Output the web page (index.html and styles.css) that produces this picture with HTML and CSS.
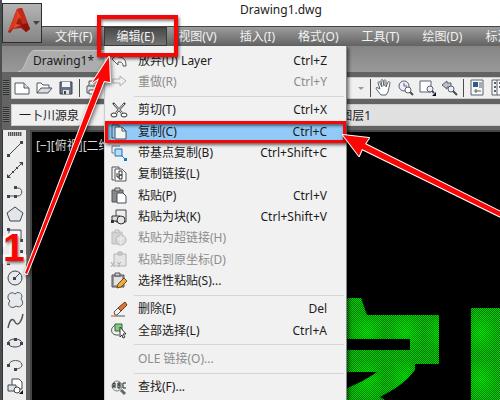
FILE: index.html
```html
<!DOCTYPE html>
<html lang="zh-CN">
  <head>
    <meta charset="UTF-8" />
    <meta name="viewport" content="width=device-width, initial-scale=1.0" />
    <title>Drawing1.dwg</title>
    <link rel="stylesheet" href="styles.css">
  </head>
  <body>
    <div class="app">
      <header class="title-bar">Drawing1.dwg</header>

      <button class="app-button" aria-label="应用程序菜单">
        <svg width="39" height="39" viewBox="0 0 39 39">
          <path d="M5 28L14 5l5-1 8 21-4 3-5-4-8 1-3 4z" fill="#a31c10" />
          <path d="M5 28L14 5l3 10-7 9z" fill="#d83a20" />
          <path d="M14 5l5-1 8 21-4 3-7-16z" fill="#c42a18" />
          <path d="M14 5l4 9-4 3 4 4-8 4 4-9z" fill="#e04a2c" />
          <path d="M13 20l3-7 3 8z" fill="#9c1a10" />
          <path d="M23 28l-5-7 6-2 3 6z" fill="#8a140c" />
          <path d="M30 17h7l-4 4z" fill="#3d4650" />
        </svg>
      </button>

      <nav class="menu-bar">
        <button>文件(F)</button>
        <button class="open">编辑(E)</button>
        <button>视图(V)</button>
        <button>插入(I)</button>
        <button>格式(O)</button>
        <button>工具(T)</button>
        <button>绘图(D)</button>
        <button>标注(N)</button>
      </nav>

      <div class="tabs">
        <button class="tab">
          <svg class="tab-edge" width="20" height="22" viewBox="0 0 20 22">
            <path d="M0 22C9 21 8 0 18 0h2v22z" fill="#adadad" />
            <path d="M0 22C9 21 8 0 18 0h2" fill="none" stroke="#c6c6c6" />
          </svg>
          <span class="tab-name">Drawing1*</span>
        </button>
      </div>

      <div class="bar">
        <span class="grip"></span>
        <div class="bar-panel tools">
          <button aria-label="新建"><svg width="18" height="18" viewBox="0 0 18 18"><path d="M2 4h9l5 5v6H2z" fill="#fff" stroke="#50565e" /><path d="M11 4v5h5" fill="#dde" stroke="#50565e" /></svg></button>
          <button aria-label="打开"><svg width="18" height="18" viewBox="0 0 18 18"><path d="M2 14V4h4l2 2h6v3" fill="#fff" stroke="#50565e" /><path d="M2 14l4-5h11l-4 5z" fill="#d8dce0" stroke="#50565e" /></svg></button>
          <button aria-label="保存"><svg width="18" height="18" viewBox="0 0 18 18"><path d="M3 3h12v12H3z" fill="#677484" stroke="#39424d" /><path d="M5 3h8v5H5z" fill="#f2f4f6" /><path d="M6 11h6v4H6z" fill="#dfe3e6" /><path d="M7 12h2v3H7z" fill="#39424d" /></svg></button>
          <span class="divider"></span>
          <button aria-label="打印"><svg width="18" height="18" viewBox="0 0 18 18"><path d="M5 7V2h8v5M3 7h12v7H3z" fill="#e6e8ea" stroke="#50565e" /><path d="M5 11h8v4H5z" fill="#fff" stroke="#50565e" /></svg></button>
          <span class="spacer"></span>
          <div class="view-tools">
            <button class="small" aria-label="重做列表"><svg width="10" height="18" viewBox="0 0 10 18"><path d="M2 8h6l-3 3z" fill="#999" /></svg></button>
            <span class="divider"></span>
            <button aria-label="平移"><svg width="18" height="18" viewBox="0 0 18 18"><path d="M6 16l-4-5c-2-3 0-3 1-2l2 1-2-6c0-2 2-2 2 0l2 4-1-6c0-2 2-2 2 0l1 5V2c0-2 2-1 2 0v6l2-5c1-1 2 0 2 1l-2 9-2 3z" fill="#fff" stroke="#59626c" /></svg></button>
            <button aria-label="实时缩放"><svg width="18" height="18" viewBox="0 0 18 18"><circle cx="7" cy="7" r="5" fill="#eef" stroke="#59626c" /><path d="M7 4v3h3" fill="none" stroke="#59626c" /><circle cx="11" cy="11" r="3" fill="#fff" stroke="#59626c" /><path d="M13 13l3 3" stroke="#454d57" stroke-width="2" /></svg></button>
            <button aria-label="窗口缩放"><svg width="18" height="18" viewBox="0 0 18 18"><path d="M1 2h11v11H1z" fill="#fff" stroke="#59626c" /><circle cx="11" cy="10" r="3" fill="#eef" stroke="#59626c" /><path d="M13 12l2 2" stroke="#454d57" stroke-width="2" /><path d="M17 13v4h-4z" fill="#111" /></svg></button>
            <button aria-label="缩放上一个"><svg width="18" height="18" viewBox="0 0 18 18"><path d="M1 6l5-4v2h4v4H6v2z" fill="#bcc3ca" stroke="#59626c" /><circle cx="10" cy="10" r="3" fill="#eef" stroke="#59626c" /><path d="M12 12l4 4" stroke="#454d57" stroke-width="2" /></svg></button>
            <span class="divider"></span>
            <button aria-label="特性"><svg width="18" height="18" viewBox="0 0 18 18"><path d="M3 1h12v15H3z" fill="#f8f8f8" stroke="#59626c" /><path d="M5 3h5v5H5z" fill="#2b5c96" /><path d="M11 4h3M11 6h3M11 8h3M6 12h7M8 10v4" stroke="#59626c" /></svg></button>
            <button aria-label="设计中心"><svg width="18" height="18" viewBox="0 0 18 18"><path d="M2 1h14v15H2zM7 1v15" fill="#f8f8f8" stroke="#59626c" /><path d="M4 4h2M4 8h2M4 12h2M9 4h5M9 8h5" stroke="#59626c" stroke-width="2" /></svg></button>
          </div>
        </div>
      </div>

      <div class="bar">
        <span class="grip"></span>
        <div class="bar-panel styles">
          <span class="style-name">一卜川源泉</span>
          <span class="layer-name">图层1</span>
        </div>
      </div>

      <main class="workspace">
        <aside class="draw-tools">
          <span class="grip-top"></span>
          <button aria-label="直线"><svg width="18" height="18" viewBox="0 0 18 18"><path d="M3 15L15 3" stroke="#3f464e" /><path d="M1 14h3v3H1zM14 1h3v3h-3z" fill="#3f464e" /></svg></button>
          <button aria-label="构造线"><svg width="18" height="18" viewBox="0 0 18 18"><path d="M3 15L15 3" stroke="#3f464e" /><path d="M1 17v-4l4 4zM17 1v4l-4-4zM6 10h2v2H6zM10 6h2v2h-2z" fill="#3f464e" /></svg></button>
          <button aria-label="多段线"><svg width="18" height="18" viewBox="0 0 18 18"><path d="M3 13h9c5 0 5-8 0-8H9" fill="none" stroke="#50565e" /><path d="M1 12h3v3H1zM8 12h3v3H8zM8 3h3v3H8z" fill="#3f464e" /></svg></button>
          <button aria-label="正多边形"><svg width="18" height="18" viewBox="0 0 18 18"><path d="M9 2l8 6-3 8H4L1 8z" fill="#e2e6ea" stroke="#3f464e" /></svg></button>
          <button aria-label="矩形"><svg width="18" height="18" viewBox="0 0 18 18"><path d="M3 4h12v10H3z" fill="#e2e6ea" stroke="#3f464e" /><path d="M1 2h3v3H1zM14 13h3v3h-3z" fill="#3f464e" /></svg></button>
          <button aria-label="圆弧"><svg width="18" height="18" viewBox="0 0 18 18"><path d="M2 15Q3 5 15 4" fill="none" stroke="#3f464e" /><path d="M1 14h3v3H1zM5 6h3v3H5zM14 2h3v3h-3z" fill="#3f464e" /></svg></button>
          <button aria-label="圆"><svg width="18" height="18" viewBox="0 0 18 18"><circle cx="9" cy="9" r="7" fill="#e6eaee" stroke="#3f464e" /><path d="M9 9l5-5" stroke="#3f464e" /><path d="M7 8h3v3H7z" fill="#3f464e" /></svg></button>
          <button aria-label="修订云线"><svg width="18" height="18" viewBox="0 0 18 18"><path d="M9 3c4-4 9 1 6 5 4 4 0 10-5 7-4 4-10-1-6-5C-1 6 4-1 9 3z" fill="#e6eaee" stroke="#50565e" /></svg></button>
          <button aria-label="样条曲线"><svg width="18" height="18" viewBox="0 0 18 18"><path d="M2 16c2-10 5-10 7-6s6 2 8-8" fill="none" stroke="#50565e" stroke-width="1.5" /></svg></button>
          <button aria-label="椭圆"><svg width="18" height="18" viewBox="0 0 18 18"><ellipse cx="9" cy="9" rx="7" ry="4" fill="#e6eaee" stroke="#3f464e" /><path d="M1 8h3v3H1zM14 8h3v3h-3zM8 4h3v3H8z" fill="#3f464e" /></svg></button>
          <button aria-label="椭圆弧"><svg width="18" height="18" viewBox="0 0 18 18"><path d="M3 9c0-6 13-6 13 0 0 3-4 4-7 4" fill="none" stroke="#50565e" /><path d="M1 8h3v3H1zM8 12h3v3H8z" fill="#3f464e" /></svg></button>
          <button aria-label="插入块"><svg width="18" height="18" viewBox="0 0 18 18"><path d="M6 2h7l3 3v7H6z" fill="#fff" stroke="#3f464e" /><path d="M2 8h8v6H2z" fill="#dfe3e7" stroke="#3f464e" /><circle cx="11" cy="13" r="3" fill="#fff" stroke="#3f464e" /><path d="M17 13v4h-4z" fill="#111" /></svg></button>
        </aside>
        <section class="canvas">
          <span class="view-label">[−][俯视][二维线框]</span>
          <!-- hatched lettering, drawn from the bottom right of the model space -->
          <svg class="hatch" width="153" height="102" viewBox="347 298 153 102">
            <defs>
              <pattern id="dots" width="2" height="2" patternUnits="userSpaceOnUse">
                <path d="M0 0h2v2H0z" fill="#006e00" />
                <path d="M0 0h1v1H0zM1 1h1v1H1z" fill="#00d400" />
              </pattern>
              <radialGradient id="spot">
                <stop offset="0" stop-color="#00ff00" stop-opacity="0.4" />
                <stop offset="1" stop-color="#00ff00" stop-opacity="0" />
              </radialGradient>
              <pattern id="glow" x="348" y="310" width="38" height="46" patternUnits="userSpaceOnUse">
                <ellipse cx="19" cy="23" rx="18" ry="22" fill="url(#spot)" />
              </pattern>
              <path id="strokes" d="M347 298h14l6 17h72v49h-24v6q-12 16-35 27l5 3h-38v-12q16-6 30-16h-30v-22h63v-11h-63zM471 308h29v92h-29z" />
            </defs>
            <use href="#strokes" fill="url(#dots)" />
            <use href="#strokes" fill="url(#glow)" />
          </svg>
        </section>
      </main>

      <div class="edit-menu" role="menu">
        <button><svg width="18" height="18" viewBox="0 0 18 18"><path d="M2 7l6-5v3c6 0 8 3 8 9h-3c0-4-2-4-5-4v3z" fill="#fff" stroke="#555" /></svg><span>放弃(U) Layer</span><kbd>Ctrl+Z</kbd></button>
        <button disabled><svg width="18" height="18" viewBox="0 0 18 18"><path d="M16 8l-6-5v3H3v4h7v3z" fill="#eee" stroke="#b0b0b0" /></svg><span>重做(R)</span><kbd>Ctrl+Y</kbd></button>
        <hr />
        <button><svg width="18" height="18" viewBox="0 0 18 18"><path d="M3 2l9 10M15 2L6 12" stroke="#333" stroke-width="2" /><path d="M4 3l8 9M14 3l-8 9" stroke="#eee" /><ellipse cx="4" cy="14" rx="3" ry="2" fill="#fff" stroke="#333" /><ellipse cx="14" cy="14" rx="3" ry="2" fill="#fff" stroke="#333" /></svg><span>剪切(T)</span><kbd>Ctrl+X</kbd></button>
        <button class="selected"><svg width="18" height="18" viewBox="0 0 18 18"><path d="M4 15H2V2h7v2" fill="none" stroke="#47515c" /><path d="M5 4h7l4 4v8H5z" fill="#f4f4f4" stroke="#47515c" /><path d="M12 4v4h4" fill="none" stroke="#47515c" /></svg><span>复制(C)</span><kbd>Ctrl+C</kbd></button>
        <button><svg width="18" height="18" viewBox="0 0 18 18"><path d="M10 2H2v7h2" fill="none" stroke="#778" /><path d="M5 5h7v7H5z" fill="#b5dcf8" stroke="#1c75b8" /><path d="M11 11l4 4" stroke="#1c75b8" /><path d="M14 14h3v3h-3z" fill="#1c75b8" /></svg><span>带基点复制(B)</span><kbd>Ctrl+Shift+C</kbd></button>
        <button><svg width="18" height="18" viewBox="0 0 18 18"><path d="M4 15H2V2h7v2" fill="none" stroke="#555" /><path d="M5 4h7l4 4v8H5z" fill="#fff" stroke="#555" /><path d="M9 6h3v4H9zM9 10h3v4H9zM7 8v4h3" fill="none" stroke="#333" /></svg><span>复制链接(L)</span></button>
        <button><svg width="18" height="18" viewBox="0 0 18 18"><path d="M2 3h11v12H2z" fill="#8a8a8a" stroke="#555" /><path d="M5 1h5v3H5z" fill="#ccc" stroke="#555" /><path d="M7 6h6l3 3v7H7z" fill="#fff" stroke="#47515c" /></svg><span>粘贴(P)</span><kbd>Ctrl+V</kbd></button>
        <button><svg width="18" height="18" viewBox="0 0 18 18"><path d="M6 2h10v12H6z" fill="#eee" stroke="#444" /><path d="M2 8h8v5H2z" fill="#ddd" stroke="#333" /><circle cx="11" cy="12" r="4" fill="#e5e5e5" stroke="#333" /><path d="M1 12h3v3H1z" fill="#333" /></svg><span>粘贴为块(K)</span><kbd>Ctrl+Shift+V</kbd></button>
        <button disabled><svg width="18" height="18" viewBox="0 0 18 18"><path d="M2 3h10v12H2z" fill="#d5d5d5" stroke="#bbb" /><path d="M5 1h4v3H5z" fill="#ddd" stroke="#bbb" /><circle cx="11" cy="11" r="5" fill="#ddd" stroke="#b5b5b5" /><path d="M7 9q4 3 8-1M11 6v10" fill="none" stroke="#eee" /></svg><span>粘贴为超链接(H)</span></button>
        <button disabled><svg width="18" height="18" viewBox="0 0 18 18"><path d="M4 3h12v12H4z" fill="#e4e4e4" stroke="#b5b5b5" /><path d="M8 1h4v3H8z" fill="#ccc" stroke="#b5b5b5" /><path d="M1 11l3 5M4 11l-3 5M7 11l2 2 2-2M9 13v3" fill="none" stroke="#aaa" /></svg><span>粘贴到原坐标(D)</span></button>
        <button><svg width="18" height="18" viewBox="0 0 18 18"><path d="M2 3h12v12H2z" fill="#9a9a9a" stroke="#555" /><path d="M4 5h8v8H4z" fill="#e2e2e2" /><path d="M5 1h5v3H5z" fill="#ccc" stroke="#555" /><path d="M7 16l1-4 6-6 3 3-6 6z" fill="#efa93c" stroke="#7a4b12" /></svg><span>选择性粘贴(S)...</span></button>
        <hr />
        <button><svg width="18" height="18" viewBox="0 0 18 18"><path d="M8 8l7-6 2 3-6 6z" fill="#dc7632" stroke="#6b3715" /><path d="M4 12l4-4 3 3-4 4H5z" fill="#f5f0ea" stroke="#555" /><path d="M1 16h5" stroke="#c44a20" /><path d="M6 16h9" stroke="#555" /></svg><span>删除(E)</span><kbd>Del</kbd></button>
        <button><svg width="18" height="18" viewBox="0 0 18 18"><path d="M6 3C0 5 0 12 6 13h3" fill="none" stroke="#555" /><path d="M5 2h7v7H5z" fill="#8cc686" stroke="#26702a" /><path d="M10 5l6 7h-3l2 3-2 1-1-3-2 2z" fill="#fff" stroke="#333" /></svg><span>全部选择(L)</span><kbd>Ctrl+A</kbd></button>
        <hr />
        <button disabled><svg width="18" height="18"></svg><span>OLE 链接(O)...</span></button>
        <hr />
        <button><svg width="18" height="18" viewBox="0 0 18 18"><circle cx="7" cy="8" r="5" fill="#dfeaea" stroke="#888" /><path d="M11 12l4 4" stroke="#666" stroke-width="3" /><path d="M3 10V6l1-1h1v5M3 8h2M8 5v5h2V5zM8 7h2M16 5h-3v5h3" fill="none" stroke="#222" /></svg><span>查找(F)...</span></button>
      </div>

      <!-- tutorial marks on top of the window -->
      <div class="mark mark-menu"></div>
      <div class="mark mark-copy"></div>
      <svg class="arrows" width="500" height="400" viewBox="0 0 500 400">
        <path d="M109 57l1 25-6-1L27 274l-2-1L99 78l-7 5z" />
        <path d="M343 135l26 3-4 6 138 69v5L362 149l-3 7z" />
      </svg>
      <span class="step">1</span>
    </div>
  </body>
</html>
```
FILE: styles.css
```css
* {
  box-sizing: border-box;
}

body {
  margin: 0;
  font-family: "Noto Sans", "Noto Sans CJK SC", sans-serif;
  font-size: 12px;
  color: #1c1c1c;
}

button {
  font: inherit;
  color: inherit;
  border: none;
  background: none;
  padding: 0;
  white-space: nowrap;
}

svg {
  display: block;
  flex: none;
}

.app {
  position: relative;
  display: flex;
  flex-direction: column;
  height: 100vh;
  overflow: hidden;
  background-color: #636363;
  border-left: 2px solid #4a4f52;
}

.title-bar {
  height: 26px;
  flex: none;
  padding-left: 60px;
  line-height: 20px;
  text-align: center;
  background-color: #fff;
}

.app-button {
  position: absolute;
  top: 3px;
  left: 0;
  z-index: 1;
  width: 40px;
  height: 40px;
  border: 1px solid #2d2d2d;
  background: linear-gradient(#b5b5b5, #858585);
}

.menu-bar {
  display: flex;
  flex: none;
  height: 20px;
  padding-left: 42px;
  overflow: hidden;
  border-top: 1px solid #454545;
  background: linear-gradient(#9d9d9d, #626262);
  color: #f2f2f2;
}

.menu-bar button {
  flex: none;
  padding: 0 12px 0 11px;
  line-height: 18px;
}

.menu-bar .open {
  border: 1px solid #3a3a3a;
  line-height: 16px;
  background: linear-gradient(#484848, #747474);
}

.tabs {
  display: flex;
  align-items: flex-end;
  flex: none;
  height: 26px;
  padding-left: 16px;
  background: linear-gradient(#858585, #999);
}

.tab {
  display: flex;
}

.tab-name {
  height: 22px;
  width: 80px;
  line-height: 20px;
  text-align: left;
  background-color: #adadad;
  border-top: 1px solid #c6c6c6;
}

.tab-edge {
  margin-right: -5px;
}

.bar {
  display: flex;
  flex: none;
  height: 22px;
  margin-top: 5px;
}

.grip {
  width: 6px;
  margin: 3px 2px 4px 1px;
  background: repeating-linear-gradient(#303030 0 1px, #777 1px 2px);
}

.bar-panel {
  display: flex;
  align-items: center;
  flex: 1;
  min-width: 0;
  border: 1px solid #ccc;
  border-right: none;
  background-color: #f0f0f0;
}

.tools {
  gap: 4px;
  padding-left: 1px;
}

.divider {
  width: 1px;
  height: 18px;
  background-color: #4c4c4c;
}

.spacer {
  flex: 1;
}

.view-tools {
  display: flex;
  align-items: center;
  gap: 4px;
  margin-right: -8px;
}

.styles {
  justify-content: space-between;
  padding: 0 129px 0 7px;
  background: linear-gradient(90deg, #f0f0f0 60%, #e0e0e0 60%);
}

.workspace {
  display: flex;
  flex: 1;
  min-height: 0;
  margin-top: 4px;
}

.draw-tools {
  display: flex;
  flex-direction: column;
  align-items: center;
  width: 24px;
  margin-right: 4px;
  padding-bottom: 3px;
  border-left: 1px solid #333;
  background-color: #ededed;
}

.grip-top {
  width: 14px;
  height: 4px;
  margin: 2px 0;
  flex: none;
  background: repeating-linear-gradient(90deg, #555 0 1px, #aaa 1px 2px);
}

.draw-tools button {
  display: flex;
  align-items: center;
  flex: 1;
  min-height: 0;
  max-height: 22px;
}

.canvas {
  position: relative;
  flex: 1;
  min-width: 0;
  border-top: 2px solid #454545;
  border-left: 2px solid #454545;
  background-color: #000;
  color: #ddd;
}

.view-label {
  display: block;
  padding: 4px;
}

.hatch {
  position: absolute;
  right: 0;
  bottom: 0;
}

.edit-menu {
  position: absolute;
  top: 46px;
  bottom: 0;
  left: 102px;
  display: flex;
  flex-direction: column;
  width: 243px;
  padding: 4px 2px 2px;
  border-left: 1px solid #ccc;
  border-right: 1px solid #888;
  background-color: #f1f1f1;
  box-shadow: 2px 2px 3px rgba(0, 0, 0, 0.5);
}

.edit-menu button {
  display: flex;
  align-items: center;
  flex: 1;
  min-height: 0;
  max-height: 22px;
  padding: 0 17px 0 3px;
  line-height: 18px;
}

.edit-menu svg {
  margin-right: 10px;
}

.edit-menu kbd {
  margin-left: auto;
  font: inherit;
}

.edit-menu button:disabled {
  color: #8c8c8c;
}

.edit-menu .selected {
  background-color: #91c9f7;
}

.edit-menu hr {
  flex: none;
  width: 210px;
  height: 1px;
  margin: 3px 0 3px auto;
  border: none;
  background-color: #d5d5d5;
}

.mark {
  position: absolute;
  border: 3px solid #f80505;
  box-shadow: 1px 2px 3px rgba(0, 0, 0, 0.6), inset 1px 2px 3px rgba(0, 0, 0, 0.5);
}

.mark-menu {
  top: 15px;
  left: 95px;
  width: 81px;
  height: 42px;
  border-width: 4px;
}

.mark-copy {
  top: 121px;
  left: 103px;
  width: 241px;
  height: 22px;
}

.arrows {
  position: absolute;
  top: 0;
  left: -2px;
  fill: #fb0505;
  stroke: #fff;
  stroke-width: 2px;
  stroke-linejoin: round;
  paint-order: stroke;
  filter: drop-shadow(1px 2px 2px rgba(0, 0, 0, 0.6));
}

.step {
  position: absolute;
  top: 226px;
  left: 1px;
  font: bold 39px/44px "Liberation Sans", sans-serif;
  color: #fb0505;
  -webkit-text-stroke: 5px #fff;
  paint-order: stroke fill;
  text-shadow: 1px 2px 3px rgba(0, 0, 0, 0.6);
}
```
